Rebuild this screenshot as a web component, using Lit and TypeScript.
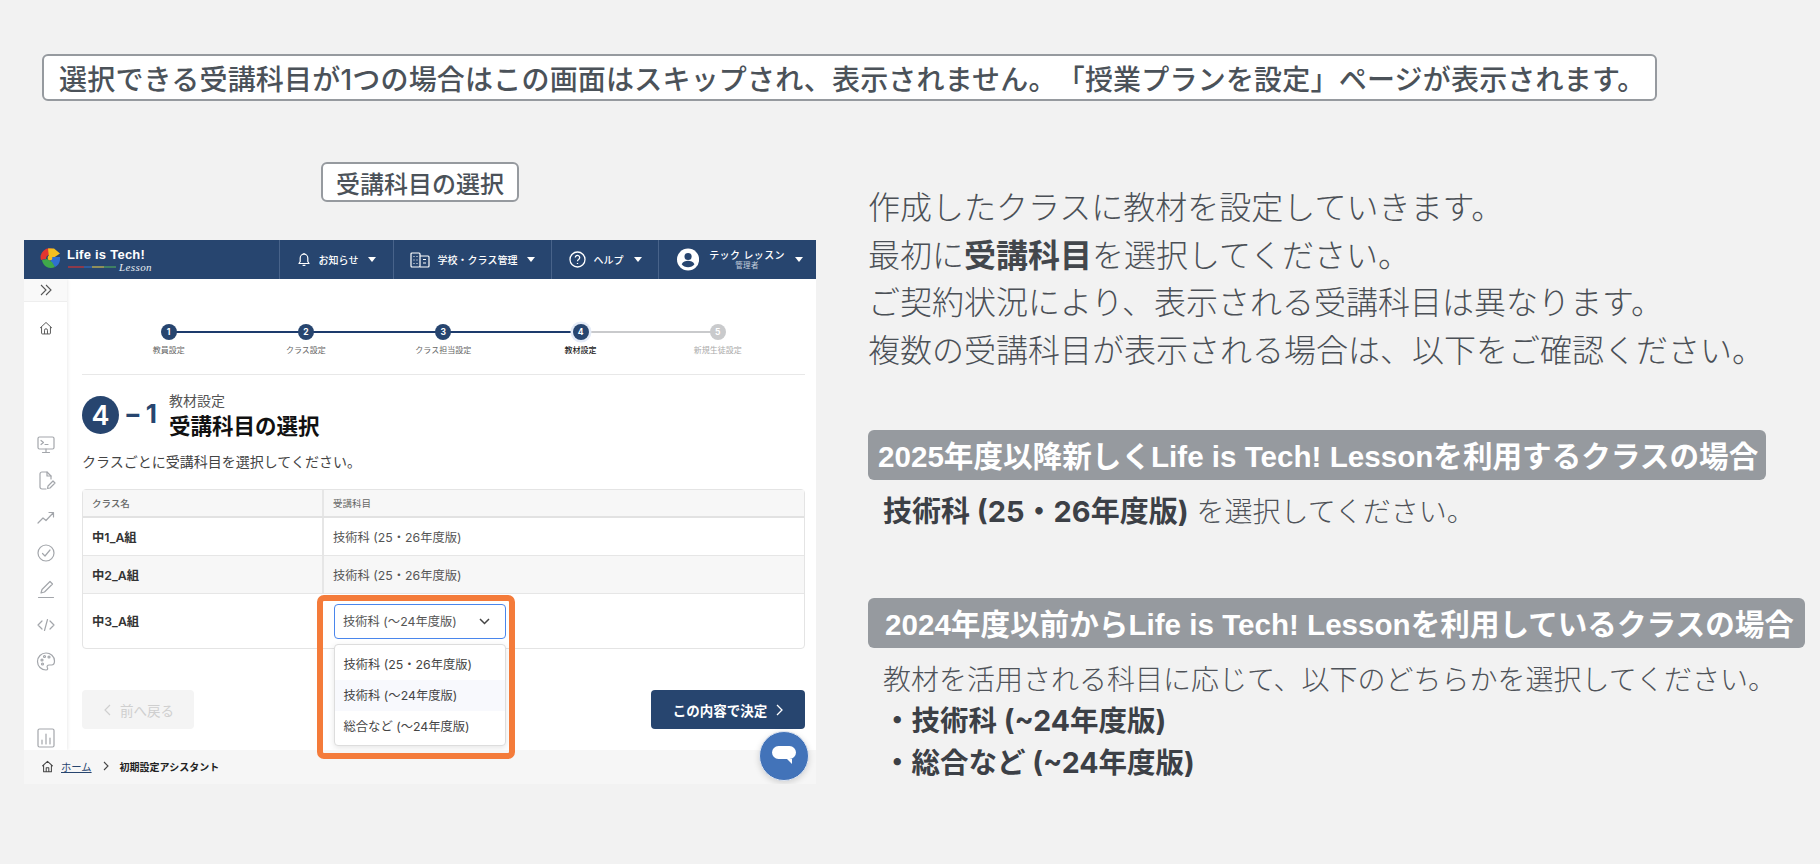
import { LitElement, html, css, svg } from "lit";
import { customElement } from "lit/decorators.js";

const tri = html`<svg class="tri" width="8" height="5" viewBox="0 0 8 5"><path d="M0 0h8L4 5z" fill="#fff"/></svg>`;
const ic = (d: unknown, cls = "side-ic") => html`<svg class=${cls} width="24" height="24" viewBox="0 0 24 24" fill="none" stroke="#a3a6ab" stroke-width="1.2" stroke-linecap="round" stroke-linejoin="round">${d}</svg>`;

const steps = [
  { n: 1, label: "教員設定", s: "done" },
  { n: 2, label: "クラス設定", s: "done" },
  { n: 3, label: "クラス担当設定", s: "done" },
  { n: 4, label: "教材設定", s: "cur" },
  { n: 5, label: "新規生徒設定", s: "todo" },
];

@customElement("app-root")
export class AppRoot extends LitElement {
  static styles = css`
    :host { display: block; width: 1820px; height: 864px; background: #f2f2f2; overflow: hidden; box-sizing: border-box; padding-top: 54px; font-family: "Noto Sans CJK JP", sans-serif; color: #4b5259; text-spacing-trim: space-all; }
    * { box-sizing: border-box; }
    .banner { margin-left: 42px; width: 1615px; height: 47px; background: #fff; border: 2px solid #969a9f; border-radius: 6px; display: flex; align-items: center; padding-left: 15px; font-size: 28px; letter-spacing: .2px; font-weight: 500; white-space: nowrap; font-family: Inter, "Noto Sans CJK JP", sans-serif; }
    .cols { display: flex; margin-top: 61px; padding-left: 24px; }
    .left { width: 792px; display: flex; flex-direction: column; align-items: center; }
    .label { width: 198px; height: 40px; background: #fff; border: 2px solid #969a9f; border-radius: 6px; display: flex; align-items: center; justify-content: center; font-size: 24px; font-weight: 500; margin-bottom: 38px; color: #4b5259; }
    .panel { position: relative; width: 792px; height: 544px; background: #fff; display: flex; flex-direction: column; font-family: Inter, "Noto Sans CJK JP", sans-serif; overflow: hidden; }

    header { height: 39px; flex: none; background: #27456f; color: #fff; display: flex; align-items: stretch; }
    .logo { flex: 1; display: flex; align-items: flex-start; padding: 7px 0 0 15px; gap: 6px; }
    .logo-txt { display: flex; flex-direction: column; }
    .logo-name { font: 700 13px/15px "Liberation Sans", sans-serif; letter-spacing: .25px; white-space: nowrap; }
    .logo-sub { display: flex; align-items: center; gap: 3px; margin-top: -1px; padding-left: 1px; }
    .rainbow { width: 48px; height: 1.5px; background: linear-gradient(90deg, #8d3a4a 0 33%, #2c5c9e 33% 50%, #8f8f5a 50% 74%, #3f7f63 74%); }
    .lesson { font: italic 11px/12px "Liberation Serif", serif; color: #e8edf4; letter-spacing: .4px; }
    .nav { border-left: 1px solid #48638a; display: flex; align-items: center; justify-content: center; font-size: 10px; font-weight: 500; white-space: nowrap; }
    .n1 { width: 114px; gap: 8px; }
    .n2 { width: 158px; gap: 8px; }
    .n3 { width: 107px; gap: 8px; }
    .n4 { width: 158px; gap: 10px; letter-spacing: .4px; justify-content: flex-start; padding: 0 13px 0 18px; }
    .n4 .tri { margin-left: auto; }
    .tri { flex: none; margin-left: 2px; }
    .who { display: flex; flex-direction: column; align-items: center; line-height: 11px; }
    .who small { font-size: 7.5px; line-height: 9px; font-weight: 400; color: #c3cddc; }

    .body { flex: 1; display: flex; min-height: 0; overflow: hidden; }
    .side { width: 43px; flex: none; background: #fff; box-shadow: 1px 0 3px rgba(0,0,0,.08); display: flex; flex-direction: column; align-items: center; z-index: 1; }
    .side-top { width: 100%; height: 34px; background: #f9f9f9; border-bottom: 1px solid #eee; display: flex; align-items: center; justify-content: center; }
    .home { margin-top: 19px; }
    .side-list { margin-top: 97px; display: flex; flex-direction: column; align-items: center; gap: 12px; }
    .chart { margin-top: 41px; }
    main { flex: 1; min-width: 0; padding: 45px 11px 0 15px; }

    .steps { display: grid; grid-template-columns: repeat(5, 137.3px); padding-left: 18px; height: 50px; }
    .step { position: relative; display: flex; flex-direction: column; align-items: center; font-size: 8px; color: #666; }
    .dot { position: relative; z-index: 1; width: 16px; height: 16px; border-radius: 50%; background: #27456f; color: #fff; font-size: 8.5px; font-weight: 700; display: flex; align-items: center; justify-content: center; }
    .step:not(:last-child)::after { content: ""; position: absolute; top: 7px; left: 50%; width: 100%; height: 2px; background: #1d3b6c; }
    .step.cur::after { background: #c9cacc; }
    .step.cur .dot { box-shadow: 0 0 0 2.5px #e4ebf7; }
    .step.cur { color: #222; font-weight: 500; }
    .step.todo { color: #aaa; }
    .step.todo .dot { background: #c9cacc; }
    .step span { margin-top: 5px; line-height: 11px; white-space: nowrap; }
    .rule { height: 1px; background: #e8e8e8; }

    .title { display: flex; align-items: flex-start; margin-top: 21px; }
    .big { width: 37px; height: 38px; border-radius: 50%; background: #27456f; color: #fff; font-size: 27px; font-weight: 600; display: flex; align-items: center; justify-content: center; }
    .sub1 { width: 50px; color: #27456f; font-size: 26px; line-height: 36px; font-weight: 700; padding-left: 5px; letter-spacing: 4px; white-space: nowrap; }
    .tt small { display: block; font-size: 14px; line-height: 18px; color: #555; margin-top: -4px; }
    .tt b { display: block; font-size: 21.5px; line-height: 30px; color: #111; font-weight: 700; margin-top: 1px; }
    .desc { font-size: 14px; line-height: 20px; margin-top: 11px; color: #444; }

    .table { margin-top: 17px; border: 1px solid #e4e4e4; border-radius: 4px; font-size: 12.3px; }
    .row { display: grid; grid-template-columns: 241px 1fr; align-items: stretch; border-bottom: 1px solid #e6e6e6; height: 38px; }
    .row:last-child { border-bottom: 0; height: 54px; }
    .row > div { display: flex; align-items: center; padding-left: 9px; color: #555; }
    .row > div:first-child { border-right: 2px solid #e6e6e6; color: #333; font-weight: 600; }
    .row.hd { height: 28px; background: #f7f7f7; font-size: 9.5px; border-bottom: 2px solid #e2e2e2; }
    .row.hd > div:first-child { color: #666; font-weight: 500; }
    .row.hd > div { color: #666; }
    .row.alt { background: #f7f7f7; }
    .row:last-child > div:first-child { border-right: 0; }
    .row:last-child > div:last-child { padding-left: 10px; }
    .select { position: relative; width: 172px; height: 35px; border: 1.5px solid #4a86ec; border-radius: 4px; background: #fff; display: flex; align-items: center; justify-content: space-between; padding: 0 15px 0 8px; }
    .menu { position: absolute; top: 39px; left: -1.5px; width: 172px; height: 102px; background: #fff; border: 1px solid #ddd; border-radius: 4px; padding: 4px 0; box-shadow: 0 2px 6px rgba(0,0,0,.1); z-index: 3; color: #444; }
    .menu div { height: 31px; display: flex; align-items: center; padding-left: 9px; white-space: nowrap; }
    .menu .hov { background: #f8f9fd; }

    .actions { display: flex; justify-content: space-between; margin-top: 41px; }
    .btn { height: 39px; border-radius: 4px; display: flex; align-items: center; font-size: 13.5px; }
    .prev { width: 112px; background: #f4f4f4; color: #cfcfcf; padding-left: 22px; gap: 9px; }
    .next { width: 154px; background: #27456f; color: #fff; font-weight: 600; justify-content: center; gap: 9px; }

    footer { height: 34px; flex: none; background: #f6f6f6; display: flex; align-items: center; padding: 0 0 2px 17px; font-size: 10px; z-index: 2; white-space: nowrap; }
    footer a { color: #27456f; text-decoration: underline; margin-left: 7px; font-size: 10.3px; }
    footer b { color: #222; font-weight: 600; margin-left: 11px; }
    footer svg.sep { margin-left: 11px; }

    .frame { position: absolute; left: 293px; top: 355px; width: 198px; height: 164px; border: 6px solid #f47b3a; border-radius: 7px; z-index: 4; pointer-events: none; }
    .chat { position: absolute; left: 735px; top: 491px; width: 50px; height: 50px; border-radius: 50%; background: #4273b9; border: 1px solid #dfe6f2; box-shadow: 0 2px 6px rgba(0,0,0,.15); z-index: 5; display: flex; align-items: center; justify-content: center; }

    .right { margin-left: 52px; padding-top: 20px; display: flex; flex-direction: column; align-items: flex-start; }
    .lead { font-size: 32px; line-height: 47.7px; color: #4b5056; font-weight: 300; white-space: nowrap; margin-bottom: 57px; }
    .lead b { font-weight: 700; color: #43474c; }
    .tag { height: 50px; background: #969a9f; color: #fff; border-radius: 6px; display: flex; align-items: center; font: 700 29.6px "Liberation Sans", "Noto Sans CJK JP", sans-serif; white-space: nowrap; }
    .t1 { width: 898px; padding-left: 10px; }
    .t2 { width: 937px; padding-left: 17px; margin-top: 62px; }
    .line { font-size: 28px; line-height: 42px; color: #4f5359; white-space: nowrap; padding-left: 15px; font-family: Inter, "Noto Sans CJK JP", sans-serif; font-weight: 300; }
    .line b { color: #3c4046; font-weight: 700; font-size: 28.5px; }
    .line.first b { font-size: 29px; }
    .line.first { margin-top: 8px; line-height: 48px; }
    .line.intro { margin-top: 12px; line-height: 40px; }
  `;

  render() {
    return html`
      <div class="banner">選択できる受講科目が1つの場合はこの画面はスキップされ、表示されません。「授業プランを設定」ページが表示されます。</div>
      <div class="cols">
        <section class="left">
          <div class="label">受講科目の選択</div>
          <div class="panel">
            <header>
              <div class="logo">
                <svg width="22" height="22" viewBox="0 0 22 22">
                  <path d="M2 13A9 9 0 0 1 14 2L11 8A4 4 0 0 0 7 12z" fill="#e5362f"/>
                  <path d="M9 1.5h6l6 5-6 4H10z" fill="#f4c020"/>
                  <path d="M11 10h10v3a9 9 0 0 1-5 7l-4-5z" fill="#2f6fd0"/>
                  <path d="M3 13l5-1 5 3 3 5a9 9 0 0 1-13-7z" fill="#3fa84a"/>
                  <circle cx="11" cy="11" r="2.4" fill="#f4c020"/>
                </svg>
                <div class="logo-txt">
                  <div class="logo-name">Life is Tech!</div>
                  <div class="logo-sub"><div class="rainbow"></div><div class="lesson">Lesson</div></div>
                </div>
              </div>
              <div class="nav n1">
                <svg width="14" height="15" viewBox="0 0 14 15" fill="none" stroke="#fff" stroke-width="1.2" stroke-linejoin="round"><path d="M2 11.5h10l-1.2-2V6a3.8 3.8 0 0 0-7.6 0v3.5z"/><path d="M5.6 13.4h2.8M7 1v1"/></svg>
                お知らせ ${tri}
              </div>
              <div class="nav n2">
                <svg width="20" height="16" viewBox="0 0 20 16" fill="none" stroke="#fff" stroke-width="1.2"><rect x="1" y="1" width="9" height="14" rx="1"/><path d="M10 4h8a1 1 0 0 1 1 1v9a1 1 0 0 1-1 1h-8"/><path d="M3.5 4.5h1M6.5 4.5h1M3.5 8h1M6.5 8h1M3.5 11.5h1M6.5 11.5h1M13 7.5h3M13 11h3"/></svg>
                学校・クラス管理 ${tri}
              </div>
              <div class="nav n3">
                <svg width="17" height="17" viewBox="0 0 17 17" fill="none" stroke="#fff" stroke-width="1.3"><circle cx="8.5" cy="8.5" r="7.5"/><path d="M6.3 6.5a2.2 2.2 0 1 1 3.3 2c-.8.4-1.1.8-1.1 1.7M8.5 12v1"/></svg>
                ヘルプ ${tri}
              </div>
              <div class="nav n4">
                <svg width="27" height="27" viewBox="0 0 26 26"><circle cx="13" cy="13" r="13" fill="#fff"/><circle cx="13" cy="9.5" r="4.2" fill="#27456f"/><path d="M5.5 18.5c1.5-3 4.5-4 7.5-4s6 1 7.5 4c-1.5 2.3-4.5 3.5-7.5 3.5s-6-1.2-7.5-3.5z" fill="#27456f"/></svg>
                <div class="who">テック レッスン<small>管理者</small></div>
                ${tri}
              </div>
            </header>
            <div class="body">
              <aside class="side">
                <div class="side-top">
                  <svg width="14" height="12" viewBox="0 0 14 12" fill="none" stroke="#555" stroke-width="1.1"><path d="M2 1l5 5-5 5M7 1l5 5-5 5"/></svg>
                </div>
                <svg class="home" width="22" height="22" viewBox="0 0 20 20" fill="none" stroke="#555" stroke-width="1.3" stroke-linejoin="round"><path d="M2 9.5L10 2l8 7.5M4 8v8.5a1 1 0 0 0 1 1h10a1 1 0 0 0 1-1V8"/><path d="M8 17.5v-5a2 2 0 0 1 4 0v5"/></svg>
                <div class="side-list">
                  ${ic(svg`<rect x="4" y="4" width="16" height="12" rx="1.5"/><path d="M7 7.5l2.5 2-2.5 2M11 11.5h3M12 16v3M8.5 19.5h7"/>`)}
                  ${ic(svg`<path d="M12 20H8a2 2 0 0 1-2-2V5a2 2 0 0 1 2-2h5l4 4v3"/><path d="M13 3v4h4M13.5 19.5l.5-2.5 5-5 2 2-5 5z"/>`)}
                  ${ic(svg`<path d="M4 18l5-5 3 2.5 7-7.5M15 7.5h4.5V12"/>`)}
                  ${ic(svg`<circle cx="12" cy="12" r="8"/><path d="M8.5 12.5l2.5 2.5 5-6"/>`)}
                  ${ic(svg`<path d="M7 16l1-3.5 8-8 2.5 2.5-8 8zM4.5 20.5h15"/>`)}
                  ${ic(svg`<path d="M8 8l-4 4 4 4M16 8l4 4-4 4M13.5 6.5l-3 11"/>`)}
                  ${ic(svg`<path d="M12 4a8.5 8.5 0 1 0 0 17c2 0 1.8-1.5 1.3-2.5-.6-1.3.2-2.5 1.7-2.5h2.5c2 0 3-1.5 3-4 0-4.5-4-8-8.5-8z"/><circle cx="8" cy="11" r="1"/><circle cx="10.5" cy="7.5" r="1"/><circle cx="15" cy="8" r="1"/><circle cx="8.5" cy="15" r="1"/>`)}
                  ${ic(svg`<rect x="4" y="3" width="16" height="18" rx="1.5"/><path d="M8 18v-4M12 18V8M16 18v-6"/>`, "side-ic chart")}
                </div>
              </aside>
              <main>
                <div class="steps">
                  ${steps.map((s) => html`<div class="step ${s.s}"><div class="dot">${s.n}</div><span>${s.label}</span></div>`)}
                </div>
                <div class="rule"></div>
                <div class="title">
                  <div class="big">4</div>
                  <div class="sub1">−1</div>
                  <div class="tt"><small>教材設定</small><b>受講科目の選択</b></div>
                </div>
                <div class="desc">クラスごとに受講科目を選択してください。</div>
                <div class="table">
                  <div class="row hd"><div>クラス名</div><div>受講科目</div></div>
                  <div class="row"><div>中1_A組</div><div>技術科 (25・26年度版)</div></div>
                  <div class="row alt"><div>中2_A組</div><div>技術科 (25・26年度版)</div></div>
                  <div class="row"><div>中3_A組</div><div>
                    <div class="select">
                      技術科 (〜24年度版)
                      <svg width="11" height="7" viewBox="0 0 11 7" fill="none" stroke="#444" stroke-width="1.5"><path d="M1 1l4.5 4.5L10 1"/></svg>
                      <div class="menu">
                        <div>技術科 (25・26年度版)</div>
                        <div class="hov">技術科 (〜24年度版)</div>
                        <div>総合など (〜24年度版)</div>
                      </div>
                    </div>
                  </div></div>
                </div>
                <div class="actions">
                  <div class="btn prev"><svg width="7" height="12" viewBox="0 0 7 12" fill="none" stroke="#cfcfcf" stroke-width="1.2"><path d="M6 1L1 6l5 5"/></svg>前へ戻る</div>
                  <div class="btn next">この内容で決定<svg width="7" height="12" viewBox="0 0 7 12" fill="none" stroke="#fff" stroke-width="1.3"><path d="M1 1l5 5-5 5"/></svg></div>
                </div>
              </main>
            </div>
            <footer>
              <svg width="13" height="13" viewBox="0 0 20 20" fill="none" stroke="#444" stroke-width="1.6" stroke-linejoin="round"><path d="M2 9.5L10 2l8 7.5M4 8v10h12V8M8 18v-6h4v6"/></svg>
              <a>ホーム</a>
              <svg class="sep" width="6" height="10" viewBox="0 0 6 10" fill="none" stroke="#444" stroke-width="1.1"><path d="M1 1l4 4-4 4"/></svg>
              <b>初期設定アシスタント</b>
            </footer>
            <div class="frame"></div>
            <div class="chat">
              <svg width="26" height="22" viewBox="0 0 26 22"><rect x="1" y="1" width="24" height="13" rx="6.5" fill="#fff"/><path d="M16 14h5v5z" fill="#fff"/></svg>
            </div>
          </div>
        </section>
        <section class="right">
          <div class="lead">作成したクラスに教材を設定していきます。<br>最初に<b>受講科目</b>を選択してください。<br>ご契約状況により、表示される受講科目は異なります。<br>複数の受講科目が表示される場合は、以下をご確認ください。</div>
          <div class="tag t1">2025年度以降新しくLife is Tech! Lessonを利用するクラスの場合</div>
          <div class="line first"><b>技術科 (25・26年度版)</b> を選択してください。</div>
          <div class="tag t2">2024年度以前からLife is Tech! Lessonを利用しているクラスの場合</div>
          <div class="line intro">教材を活用される科目に応じて、以下のどちらかを選択してください。</div>
          <div class="line"><b>・技術科 (~24年度版)</b></div>
          <div class="line"><b>・総合など (~24年度版)</b></div>
        </section>
      </div>
    `;
  }
}
